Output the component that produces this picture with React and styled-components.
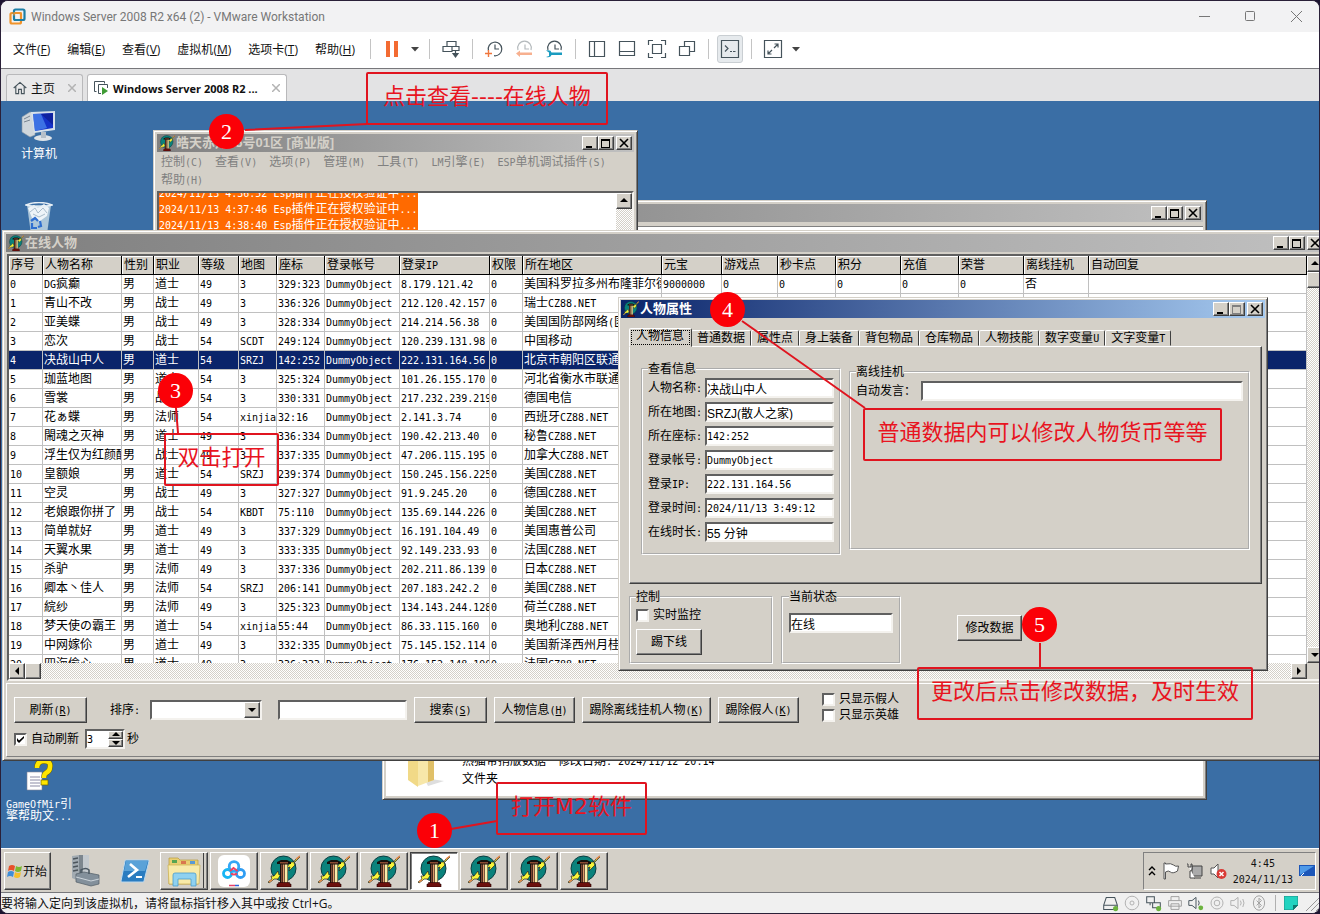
import { useState } from 'react';
import styled, { createGlobalStyle, css } from 'styled-components';

const GlobalStyle = createGlobalStyle`
  * {
    box-sizing: border-box;
  }
  body {
    margin: 0;
    background: #1c1430;
  }
  button, input, select {
    font: inherit;
    color: inherit;
    margin: 0;
    padding: 0;
  }
  button {
    background: none;
    border: 0;
    white-space: nowrap;
  }
`;

const modernFont = `'Open Sans', 'Noto Sans CJK SC', sans-serif`;
const classicFont = `'Liberation Sans', 'Noto Sans CJK SC', sans-serif`;

const raised = css`
  border: 1px solid;
  border-color: #d4d0c8 #404040 #404040 #d4d0c8;
  box-shadow: inset 1px 1px #fff, inset -1px -1px #808080;
`;

const raisedButton = css`
  border: 1px solid;
  border-color: #fff #404040 #404040 #fff;
  box-shadow: inset -1px -1px #808080;
  background: #d4d0c8;
`;

const sunken = css`
  border: 2px solid;
  border-color: #606060 #f4f2ee #f4f2ee #606060;
`;

const dither = css`
  background: repeating-conic-gradient(#fff 0 25%, #d4d0c8 0 50%) 0 0 / 2px 2px;
`;

/* ---------- host window ---------- */

const Host = styled.div`
  position: relative;
  display: flex;
  flex-direction: column;
  height: 100vh;
  min-height: 900px;
  border: 1px solid #2a2038;
  border-radius: 8px;
  overflow: hidden;
  background: #f0f0f0;
  font-family: ${modernFont};
  font-size: 12px;
  color: #111;
`;

const HostTitle = styled.header`
  display: flex;
  align-items: center;
  height: 31px;
  flex: none;
  padding-left: 8px;
  gap: 5px;
  background: #f2f2f3;
  color: #777;
`;

const HostName = styled.span`
  flex: 1;
  font-family: Roboto, sans-serif;
  font-size: 12px;
`;

const HostControl = styled.button`
  display: flex;
  align-items: center;
  justify-content: center;
  width: 46px;
  height: 30px;
`;

const HostControls = styled.div`
  display: flex;
`;

const MenuBar = styled.nav`
  display: flex;
  align-items: center;
  height: 37px;
  flex: none;
  padding: 0 0 2px 12px;
  background: #fff;
  border-bottom: 1px solid #77777b;
`;

const MenuList = styled.div`
  display: flex;
  gap: 17px;
  width: 351px;
`;

const Separator = styled.span`
  width: 1px;
  height: 20px;
  margin: 0 6px;
  background: #c4c4c4;
`;

const ToolButton = styled.button`
  display: flex;
  align-items: center;
  justify-content: center;
  width: ${props => (props.$narrow ? '16px' : '30px')};
  height: 28px;
`;

const ToolPressed = styled.span`
  display: flex;
  align-items: center;
  justify-content: center;
  width: 26px;
  height: 28px;
  border: 1px solid #c9ced2;
  border-radius: 3px;
  background: #e6eaed;
`;

const TabBar = styled.div`
  display: flex;
  align-items: flex-end;
  height: 32px;
  flex: none;
  padding-left: 5px;
  gap: 4px;
  background: #e3e3e4;
`;

const HostTab = styled.div`
  display: flex;
  align-items: center;
  height: 27px;
  width: ${props => props.$width};
  padding: 0 6px;
  gap: 4px;
  border: 1px solid #b9b9bb;
  border-bottom: 0;
  border-radius: 3px 3px 0 0;
  background: ${props => (props.$active ? '#fff' : '#e9e9ea')};
  font-weight: ${props => (props.$active ? 'bold' : 'normal')};
  font-size: ${props => (props.$active ? '11px' : '12px')};
`;

const TabName = styled.button`
  flex: 1;
  text-align: left;
`;

const StatusBar = styled.footer`
  display: flex;
  align-items: center;
  height: 21px;
  flex: none;
  border-top: 1px solid #77777b;
  background: #f0f0f0;
`;

const StatusText = styled.span`
  flex: 1;
`;

const StatusIcons = styled.div`
  display: flex;
  align-items: center;
  gap: 5px;
`;

const StatusDivider = styled.span`
  width: 1px;
  height: 16px;
  margin: 0 3px;
  background: #b0b0b0;
`;

/* ---------- guest desktop ---------- */

const Desktop = styled.main`
  position: relative;
  flex: 1;
  overflow: hidden;
  background: #3a6ea5;
  font-family: ${classicFont};
  font-size: 12px;
  line-height: 14px;
  color: #000;
`;

const Shortcut = styled.button`
  position: absolute;
  left: ${props => props.$x}px;
  top: ${props => props.$y}px;
  display: flex;
  flex-direction: column;
  align-items: center;
  gap: 6px;
  width: 76px;
  color: #fff;
  line-height: 12px;
  white-space: pre-line;
`;

const ShortcutLabel = styled.span`
  text-align: left;
`;

const Ascii = styled.span`
  font-family: 'DejaVu Sans Mono', monospace;
  font-size: 10px;
  line-height: 1;
`;

const Window = styled.section`
  position: absolute;
  left: ${props => props.$x}px;
  top: ${props => props.$y}px;
  width: ${props => props.$w};
  height: ${props => props.$h}px;
  right: ${props => props.$right || 'auto'};
  display: flex;
  flex-direction: column;
  padding: ${props => props.$frame || 3}px;
  background: #d4d0c8;
  ${raised}
`;

const Caption = styled.div`
  display: flex;
  align-items: center;
  height: 18px;
  flex: none;
  padding: 0 2px;
  gap: 1px;
  color: ${props => (props.$active ? '#fff' : '#d4d0c8')};
  font-size: 13px;
  font-weight: bold;
  background: ${props => (props.$active
    ? 'linear-gradient(90deg, #0a246a, #a6caf0)'
    : 'linear-gradient(90deg, #808080, #c0c0c0)')};
`;

const CaptionText = styled.span`
  flex: 1;
  white-space: pre;
`;

const CaptionButtons = styled.div`
  display: flex;

  button:last-child {
    margin-left: 2px;
  }
`;

const CaptionButton = styled.button`
  display: flex;
  align-items: center;
  justify-content: center;
  width: 16px;
  height: 14px;
  ${raisedButton}
`;

const WindowMenu = styled.nav`
  display: flex;
  flex-wrap: wrap;
  padding: 1px 0 2px;
  color: #808080;
`;

const WindowMenuItem = styled.button`
  height: 18px;
  margin-right: 6px;
  padding: 0 2px 0 4px;
`;

const LogBox = styled.div`
  display: flex;
  height: 60px;
  overflow: hidden;
  background: #fff;
  ${sunken}
`;

const LogLines = styled.div`
  flex: 1;
  margin-top: -8px;
`;

const LogLine = styled.div`
  width: 259px;
  height: 16px;
  line-height: 16px;
  background: #ff6a00;
  color: #fff;
  white-space: pre;
`;

const FolderBody = styled.div`
  display: flex;
  flex: 1;
  align-items: flex-end;
  gap: 16px;
  margin-top: 4px;
  padding: 0 0 8px 20px;
  background: #fff;
  border-top: 1px solid #808080;
`;

const FolderLines = styled.div`
  line-height: 18px;
  white-space: pre;
`;

/* ---------- online list ---------- */

const GridFrame = styled.div`
  margin: 2px 0 0 1px;
  ${sunken}
`;

const GridRow = styled.div`
  display: flex;
`;

const GridView = styled.div`
  flex: 1;
  min-width: 0;
  height: 407px;
  overflow: hidden;
  background: #fff;
`;

const Table = styled.table`
  width: 100%;
  table-layout: fixed;
  border-collapse: separate;
  border-spacing: 0;
`;

const Th = styled.th`
  width: ${props => props.$w};
  height: 19px;
  padding: 0 0 0 2px;
  overflow: hidden;
  text-align: left;
  font-weight: normal;
  white-space: nowrap;
  background: #d4d0c8;
  border-right: 1px solid #000;
  border-bottom: 1px solid #000;
  box-shadow: inset 1px 1px #fff;
`;

const Td = styled.td`
  height: 19px;
  padding: 0 0 0 1px;
  overflow: hidden;
  white-space: nowrap;
  border-right: 1px solid #c0c0c0;
  border-bottom: 1px solid #c0c0c0;
`;

const Tr = styled.tr`
  background: ${props => (props.$selected ? '#0a246a' : '#fff')};
  color: ${props => (props.$selected ? '#fff' : '#000')};
`;

const ScrollTrack = styled.div`
  display: flex;
  flex-direction: ${props => (props.$vertical ? 'column' : 'row')};
  flex: ${props => (props.$vertical ? 'none' : '1')};
  width: ${props => (props.$vertical ? '16px' : 'auto')};
  ${dither}

  button:last-child:not(:only-child) {
    margin: ${props => (props.$vertical ? 'auto 0 0' : '0 0 0 auto')};
  }
`;

const ScrollButton = styled.button`
  display: flex;
  align-items: center;
  justify-content: center;
  flex: none;
  width: 16px;
  height: 16px;
  ${raisedButton}
`;

const Corner = styled.span`
  width: 16px;
`;

const ActionPanel = styled.div`
  flex: 1;
  margin: 2px 0 0;
  padding: 13px 7px 0;
  border: 1px solid;
  border-color: #fff #808080 #808080 #fff;
`;

const ActionRow = styled.div`
  display: flex;
  align-items: center;
  gap: 7px;
  height: 26px;
`;

const AutoRow = styled.div`
  display: flex;
  align-items: center;
  gap: 2px;
  height: 20px;
  margin-top: 6px;

  label {
    margin-right: 4px;
  }
`;

const Button = styled.button`
  width: ${props => props.$w}px;
  height: 26px;
  ${raisedButton}
`;

const SortLabel = styled.label`
  margin: 0 3px 0 16px;
`;

const Combo = styled.div`
  position: relative;
  width: 112px;
  height: 20px;
  margin-right: 9px;
`;

const Select = styled.select`
  appearance: none;
  width: 100%;
  height: 100%;
  border-radius: 0;
  background: #fff;
  ${sunken}
`;

const ComboArrow = styled.span`
  position: absolute;
  top: 2px;
  right: 2px;
  display: flex;
  align-items: center;
  justify-content: center;
  width: 16px;
  height: 16px;
  pointer-events: none;
  ${raisedButton}
`;

const TextBox = styled.input`
  width: ${props => props.$w || '100%'};
  height: 20px;
  flex: ${props => (props.$grow ? '1' : 'none')};
  min-width: 0;
  background: #fff;
  ${sunken}
  ${props => props.$ascii && css`
    font-family: 'DejaVu Sans Mono', monospace;
    font-size: 10px;
  `}
`;

const CheckGroup = styled.div`
  display: flex;
  flex-direction: column;
  margin: 0 0 6px 16px;
`;

const CheckLabel = styled.label`
  display: flex;
  align-items: center;
  gap: 4px;
  height: 16px;
`;

const CheckBox = styled.input`
  appearance: none;
  width: 13px;
  height: 13px;
  background: #fff;
  ${sunken}

  &:checked {
    background: #fff url("data:image/svg+xml,%3Csvg xmlns='http://www.w3.org/2000/svg' viewBox='0 0 9 9'%3E%3Cpath d='M1 3v3l2 2 5-5V1L3 5.500z'/%3E%3C/svg%3E") center / 9px 9px no-repeat;
  }
`;

const Spinner = styled.div`
  display: flex;
  width: 40px;
  height: 20px;
  background: #fff;
  ${sunken}
`;

const SpinInput = styled.input`
  width: 20px;
  height: 16px;
  border: 0;
  background: none;
  font-family: 'DejaVu Sans Mono', monospace;
  font-size: 10px;
`;

const SpinButtons = styled.div`
  display: flex;
  flex-direction: column;
  margin-left: auto;
`;

const SpinButton = styled.button`
  display: flex;
  align-items: center;
  justify-content: center;
  width: 15px;
  height: 8px;
  ${raisedButton}
`;

/* ---------- player properties ---------- */

const TabStrip = styled.div`
  display: flex;
  align-items: flex-end;
  height: 28px;
  flex: none;
  padding-left: 10px;
`;

const Tab = styled.button`
  height: ${props => (props.$active ? '19px' : '16px')};
  margin: ${props => (props.$active ? '0 -1px -1px -2px' : '0')};
  padding: ${props => (props.$active ? '0 7px 2px 6px' : '0 5px')};
  z-index: ${props => (props.$active ? 1 : 0)};
  line-height: 13px;
  background: #d4d0c8;
  border: 1px solid;
  border-color: #fff #404040 transparent #fff;
  border-radius: 2px 2px 0 0;
  outline: ${props => (props.$active ? '1px dotted #000' : 'none')};
  outline-offset: -3px;
`;

const Pane = styled.div`
  display: flex;
  align-items: flex-start;
  gap: 8px;
  height: 238px;
  margin: 0 3px 0 8px;
  padding: 16px 11px 0;
  ${raisedButton}
`;

const Group = styled.fieldset`
  width: ${props => props.$w};
  flex: ${props => (props.$grow ? '1' : 'none')};
  height: ${props => props.$h}px;
  min-width: 0;
  margin: ${props => props.$offset || '0'};
  padding: ${props => props.$pad || '1px 5px 0'};
  border: 2px groove #fff;
`;

const Legend = styled.legend`
  padding: 0;
  line-height: 12px;
`;

const Field = styled.div`
  display: flex;
  align-items: center;
  height: 24px;
`;

const FieldLabel = styled.label`
  width: ${props => props.$w || '57px'};
  white-space: nowrap;
`;

const KickRow = styled.div`
  padding-top: 2px;
`;

const PropsFooter = styled.div`
  display: flex;
  align-items: flex-start;
  gap: 8px;
  padding: 7px 8px 0;
`;

const SaveCell = styled.div`
  padding: 24px 0 0 48px;
`;

/* ---------- taskbar ---------- */

const Taskbar = styled.div`
  display: flex;
  align-items: center;
  height: 44px;
  flex: none;
  padding: 0 3px;
  background: #d4d0c8;
  border-top: 1px solid #fff;
  font-family: ${classicFont};
`;

const StartButton = styled.button`
  display: flex;
  align-items: center;
  width: 47px;
  height: 38px;
  padding-left: 2px;
  ${raisedButton}
`;

const Launchers = styled.div`
  display: flex;
  margin: 0 7px 0 9px;
`;

const Launcher = styled.button`
  display: flex;
  align-items: center;
  justify-content: center;
  width: 50px;
  height: 38px;
`;

const Tasks = styled.div`
  display: flex;
  flex: 1;
  gap: 2px;
  margin-left: -7px;
`;

const Task = styled.button`
  display: flex;
  align-items: center;
  justify-content: center;
  width: 48px;
  height: 38px;
  ${raisedButton}
  ${props => props.$stacked && css`
    box-shadow: inset -1px -1px #808080, inset -3px 0 #d4d0c8, inset -4px 0 #404040;
  `}
  ${props => props.$active && css`
    background: #fff;
    border-color: #404040 #fff #fff #404040;
    box-shadow: inset 1px 1px #808080;
  `}
`;

const Tray = styled.div`
  display: flex;
  align-items: center;
  gap: 6px;
  height: 38px;
  padding: 0 0 0 4px;
  border: 1px solid;
  border-color: #808080 #fff #fff #808080;
`;

const Clock = styled.div`
  text-align: center;
  line-height: 16px;
`;

/* ---------- tutorial notes ---------- */

const Notes = styled.div`
  position: absolute;
  inset: 0;
  pointer-events: none;
  font-family: 'DejaVu Sans', 'Noto Sans CJK SC', sans-serif;
`;

const NoteLines = styled.svg`
  position: absolute;
  inset: 0;
  width: 100%;
  height: 100%;
`;

const NoteBox = styled.div`
  position: absolute;
  left: ${props => props.$x}px;
  top: ${props => props.$y}px;
  width: ${props => props.$w}px;
  height: 53px;
  border: 2px solid #e0141f;
  border-radius: 2px;
  color: #e8141f;
  font-size: 22px;
  line-height: 46px;
  text-align: center;
  white-space: nowrap;
`;

const NoteDot = styled.div`
  position: absolute;
  left: ${props => props.$x}px;
  top: ${props => props.$y}px;
  width: 35px;
  height: 35px;
  border-radius: 50%;
  background: #fb0007;
  color: #fff;
  font-family: 'Liberation Serif', serif;
  font-size: 22px;
  line-height: 35px;
  text-align: center;
`;

/* ---------- icons ---------- */

const Line = ({ size = 20, color = '#45535b', width = 1.2, children }) => (
  <svg width={size} height={size} viewBox="0 0 20 20" fill="none" stroke={color} strokeWidth={width}>
    {children}
  </svg>
);

const VmwareIcon = () => (
  <svg width="17" height="17" viewBox="0 0 17 17" fill="none" strokeWidth="2.200">
    <rect x="1.500" y="5" width="10.500" height="10.500" rx="1.500" stroke="#f0932b" />
    <rect x="5" y="1.500" width="10.500" height="10.500" rx="1.500" stroke="#1d7fa6" />
    <path d="M5 7.500V5h7v4" stroke="#f0932b" strokeWidth="1.400" />
  </svg>
);

const Caret = () => (
  <svg width="8" height="5" viewBox="0 0 8 5"><path d="M0 0h8L4 4.500z" fill="#444" /></svg>
);

const SmallX = () => (
  <svg width="8" height="8" viewBox="0 0 8 8" stroke="#b3b3b3" strokeWidth="1.500"><path d="M0 0l8 8M8 0L0 8" /></svg>
);

// the column and lightning logo of the game engine
const EngineIcon = ({ size = 32 }) => (
  <svg width={size} height={size} viewBox="0 0 32 32">
    <circle cx="15.500" cy="13.500" r="12.500" fill="#0a827c" stroke="#0a3d40" />
    <path d="M0 27l4-3-1-3h3l4-5 1 4 2-1-3 5-4 0-1 1-4 3z" fill="#f7f53a" stroke="#222" strokeWidth=".7" />
    <path d="M32 1l-5 4-1 2-3 0-5 6 4-1-1 4 6-6-1-2 2-2 4-4z" fill="#f7f53a" stroke="#222" strokeWidth=".7" />
    <path d="M28 4l4-3M1 27l3-2" stroke="#e9864a" strokeWidth="1.300" />
    <path d="M9 7l4-2h6l4 2v2h-3v19h-8V9H9z" fill="#15100e" />
    <path d="M12 7h8v1.500h-8z" fill="#8a4a32" />
    <path d="M13 9.500h1.500V28H13z" fill="#7e4630" />
    <path d="M15 9.500h1.500V28H15z" fill="#dc9a6b" />
    <path d="M17 9.500h2.500V28H17z" fill="#f8eda8" />
    <path d="M10.500 27.500h11V29H23v3H9v-3h1.500z" fill="#6d0f0c" stroke="#200" strokeWidth=".6" />
  </svg>
);

const Arrow = ({ dir }) => {
  const paths = {
    up: 'M0 5h8L4 1z',
    down: 'M0 2h8L4 6z',
    left: 'M6 0v8L2 4z',
    right: 'M2 0v8l4-4z',
  };
  return <svg width="8" height="8" viewBox="0 0 8 8"><path d={paths[dir]} fill="#000" /></svg>;
};

const ComputerIcon = () => (
  <svg width="36" height="32" viewBox="0 0 36 32">
    <path d="M1 7l8-5 5 1v22l-5 2-8-5z" fill="#cfd6dc" stroke="#8b98a5" strokeWidth=".6" />
    <path d="M3 9l6-3M3 12l6-2" stroke="#798591" />
    <ellipse cx="22" cy="28" rx="9" ry="3" fill="#dfe4e8" />
    <path d="M20 22h5v6h-5z" fill="#b6c0c9" />
    <path d="M10 2l24-1v19l-21 3z" fill="#d5e0ea" />
    <path d="M12 4l20-1v15l-18 3z" fill="#1432c8" />
    <path d="M12 4l8 0 6 14-12 3z" fill="#4d8cf0" opacity=".7" />
    <path d="M20 4l12-1v12z" fill="#0b1b8f" opacity=".7" />
  </svg>
);

const BinIcon = () => (
  <svg width="28" height="34" viewBox="0 0 28 34">
    <path d="M2 3h24l-4 29H6z" fill="#b9cfdf" opacity=".9" />
    <path d="M3 6l6-3 4 3 6-4 5 4-2 8-7 5-8-3z" fill="#eef4f8" />
    <path d="M5 10l5-4 3 5 5-5 4 5M8 12l6 3 6-3" fill="none" stroke="#a9bccb" />
    <path d="M1 3q13-5 26 0-13 4-26 0z" fill="none" stroke="#e7eff5" strokeWidth="1.500" />
    <path d="M6 19l4-3 3 3M7 21l0 5 5 0M13 25l3-1-1-5" fill="none" stroke="#2f6fd0" strokeWidth="2.200" />
  </svg>
);

const HelpFileIcon = () => (
  <svg width="28" height="34" viewBox="0 0 28 34">
    <path d="M2 14h15v18H2z" fill="#fff" stroke="#889" strokeWidth=".6" />
    <path d="M5 19h10M5 22h10M5 25h10M5 28h10" stroke="#8b8ba5" />
    <path d="M12 10q0-7 7-7t6 6q0 4-4 6-2 1-2 5" fill="none" stroke="#6f6400" strokeWidth="5.500" />
    <path d="M12 10q0-7 7-7t6 6q0 4-4 6-2 1-2 5" fill="none" stroke="#ffe600" strokeWidth="4.500" />
    <rect x="16" y="22" width="7" height="5" fill="#ffe600" stroke="#6f6400" strokeWidth=".7" />
  </svg>
);

const FolderIcon = () => (
  <svg width="40" height="44" viewBox="0 0 40 44">
    <path d="M18 34l20 3-16 5z" fill="#c8c8c8" opacity=".6" />
    <path d="M2 0h10v43L2 36z" fill="#f1d987" />
    <path d="M12 0h16v36l-16 6z" fill="#f7e7a9" />
    <path d="M22 0h6v36l-6 2z" fill="#e0c068" />
  </svg>
);

const StartIcon = () => (
  <svg width="16" height="16" viewBox="0 0 16 16">
    <path d="M2 3q3-2 6 0L7 8Q4 6 1 8z" fill="#e8502a" />
    <path d="M9 3q3 2 6 0l-1 5q-3 2-6 0z" fill="#7cb82f" />
    <path d="M1 9q3-2 6 0l-1 5q-3-2-6 0z" fill="#3f8ed8" />
    <path d="M8 9q3 2 6 0l-1 5q-3 2-6 0z" fill="#f5bf2a" />
  </svg>
);

const ServerIcon = () => (
  <svg width="30" height="32" viewBox="0 0 30 32">
    <path d="M2 1l7-1v26l-7-3z" fill="#a2abb2" />
    <path d="M9 0h10v22H9z" fill="#7c868e" />
    <path d="M13 0h6v22h-6z" fill="#c3c9ce" />
    <path d="M3 4l5-1M3 8l5-1M3 12l5-1M3 16l5-1" stroke="#4c555c" strokeWidth="1.400" />
    <path d="M6 19l8-2 15 3v9l-8 2-15-4z" fill="#83909b" stroke="#505c66" strokeWidth=".7" />
    <path d="M11 18v-3q5-3 8 0v4" fill="none" stroke="#4c5963" strokeWidth="1.600" />
    <path d="M6 22l15 4 8-2" fill="none" stroke="#cdd5db" />
  </svg>
);

const PowerShellIcon = () => (
  <svg width="30" height="26" viewBox="0 0 30 26">
    <path d="M6 2h22q1 0 1 1l-5 20q0 1-1 1H2q-1 0-1-1L5 3q0-1 1-1z" fill="#2a7cc0" stroke="#bcd9ee" />
    <path d="M6 3h22l-3 10H4z" fill="#6fb2e2" opacity=".7" />
    <path d="M10 6l7 6-9 7" fill="none" stroke="#fff" strokeWidth="2.600" />
    <path d="M16 19h6" stroke="#fff" strokeWidth="2.200" />
  </svg>
);

const ExplorerIcon = () => (
  <svg width="34" height="32" viewBox="0 0 34 32">
    <path d="M2 3h9l2 2h18v24H2z" fill="#e9cf74" stroke="#b99b3c" strokeWidth=".7" />
    <path d="M5 5h5v3H5z" fill="#57a552" /><path d="M14 6h5v3h-5z" fill="#d9774e" /><path d="M23 6h5v3h-5z" fill="#5a9ad5" />
    <path d="M1 10h32l-1 19H2z" fill="#f8eaa8" stroke="#cbb050" strokeWidth=".7" />
    <path d="M6 31V20q0-2 2-2h19q2 0 2 2v11h-5v-7H11v7z" fill="#8fd1f0" stroke="#4a9dcb" strokeWidth=".8" />
  </svg>
);

const BaiduIcon = () => (
  <svg width="32" height="32" viewBox="0 0 32 32" fill="none" strokeWidth="2.800">
    <rect width="32" height="32" rx="6" fill="#fff" />
    <circle cx="16" cy="11.500" r="4.800" stroke="#35a7f5" />
    <circle cx="9.500" cy="18.500" r="4" stroke="#18b6f4" />
    <circle cx="22.500" cy="18.500" r="4" stroke="#2f9df3" />
    <path d="M12 16l3.500-3 4 3M13 18.500q3 2 6 0" stroke="#ee4262" strokeWidth="2" />
    <path d="M11 30.500h6" stroke="#e8406a" strokeWidth="1.500" /><path d="M17 30.500h4" stroke="#2d62d8" strokeWidth="1.500" />
  </svg>
);

const Dot = () => <circle cx="16" cy="16" r="3" fill="#6cb33f" stroke="none" />;

/* ---------- data ---------- */

const columns = [
  ['序号', 34], ['人物名称', 79], ['性别', 32], ['职业', 45], ['等级', 40], ['地图', 38],
  ['座标', 48], ['登录帐号', 75], ['登录IP', 90], ['权限', 33], ['所在地区', 139], ['元宝', 60],
  ['游戏点', 56], ['秒卡点', 58], ['积分', 65], ['充值', 58], ['荣誉', 65], ['离线挂机', 65],
  ['自动回复', null],
];

const players = [
  ['DG疯癫', '道士', 49, '3', '329:323', '8.179.121.42', '美国科罗拉多州布隆菲尔德'],
  ['青山不改', '战士', 49, '3', '336:326', '212.120.42.157', '瑞士CZ88.NET'],
  ['亚美蝶', '战士', 49, '3', '328:334', '214.214.56.38', '美国国防部网络(匿名)'],
  ['恋次', '战士', 54, 'SCDT', '249:124', '120.239.131.98', '中国移动'],
  ['决战山中人', '道士', 54, 'SRZJ', '142:252', '222.131.164.56', '北京市朝阳区联通'],
  ['珈蓝地图', '道士', 54, '3', '325:324', '101.26.155.170', '河北省衡水市联通'],
  ['雪裳', '战士', 54, '3', '330:331', '217.232.239.219', '德国电信'],
  ['花ぁ蝶', '法师', 54, 'xinjia', '32:16', '2.141.3.74', '西班牙CZ88.NET'],
  ['閙魂之灭神', '道士', 49, '3', '336:334', '190.42.213.40', '秘鲁CZ88.NET'],
  ['浮生仅为红颜醉', '战士', 49, '3', '337:335', '47.206.115.195', '加拿大CZ88.NET'],
  ['皇额娘', '道士', 54, 'SRZJ', '239:374', '150.245.156.225', '美国CZ88.NET'],
  ['空灵', '战士', 49, '3', '327:327', '91.9.245.20', '德国CZ88.NET'],
  ['老娘跟你拼了', '战士', 54, 'KBDT', '75:110', '135.69.144.226', '美国CZ88.NET'],
  ['简单就好', '道士', 49, '3', '337:329', '16.191.104.49', '美国惠普公司'],
  ['天翼水果', '道士', 49, '3', '333:335', '92.149.233.93', '法国CZ88.NET'],
  ['杀驴', '法师', 49, '3', '337:336', '202.211.86.139', '日本CZ88.NET'],
  ['卿本丶佳人', '法师', 54, 'SRZJ', '206:141', '207.183.242.2', '美国CZ88.NET'],
  ['綄纱', '法师', 49, '3', '325:323', '134.143.244.128', '荷兰CZ88.NET'],
  ['梦天使の霸王', '道士', 54, 'xinjia', '55:44', '86.33.115.160', '奥地利CZ88.NET'],
  ['中网嫁伱', '道士', 49, '3', '332:335', '75.145.152.114', '美国新泽西州月桂'],
  ['四海偷心', '道士', 49, '3', '336:333', '176.152.148.190', '法国CZ88.NET'],
];

const info = [
  ['人物名称:', '决战山中人'],
  ['所在地图:', 'SRZJ(散人之家)'],
  ['所在座标:', '142:252'],
  ['登录帐号:', 'DummyObject'],
  ['登录IP:', '222.131.164.56'],
  ['登录时间:', '2024/11/13 3:49:12'],
  ['在线时长:', '55 分钟'],
];

const propTabs = ['人物信息', '普通数据', '属性点', '身上装备', '背包物品', '仓库物品', '人物技能', '数字变量U', '文字变量T'];

const isAscii = text => /^[\x20-\x7e]*$/.test(text);

// latin runs take half the width of a CJK character
const Txt = ({ children }) => String(children).split(/([\x20-\x7e]+)/).filter(Boolean).map((part, i) => (
  isAscii(part) ? <Ascii key={i}>{part}</Ascii> : part
));

const Hot = ({ text, letter }) => (
  <>{text}<Ascii>(<u>{letter}</u>)</Ascii></>
);

function WindowButtons({ maxDisabled }) {
  const c = maxDisabled ? '#808080' : '#000';
  return (
    <CaptionButtons>
      <CaptionButton aria-label="最小化">
        <svg width="10" height="10" viewBox="0 0 10 10"><path d="M1 8h6v2H1z" /></svg>
      </CaptionButton>
      <CaptionButton aria-label="最大化" disabled={maxDisabled}>
        <svg width="10" height="10" viewBox="0 0 10 10"><path d="M0 1h9v9H0zM1 3v6h7V3z" fill={c} fillRule="evenodd" /></svg>
      </CaptionButton>
      <CaptionButton aria-label="关闭">
        <svg width="10" height="10" viewBox="0 0 10 10" stroke="#000" strokeWidth="1.600"><path d="M1 1l8 8M9 1L1 9" /></svg>
      </CaptionButton>
    </CaptionButtons>
  );
}

function HostToolbar() {
  return (
    <>
      <Separator />
      <ToolButton aria-label="暂停">
        <svg width="12" height="16" viewBox="0 0 12 16"><path d="M0 0h4v16H0zM8 0h4v16H8z" fill="#f36b32" /></svg>
      </ToolButton>
      <ToolButton $narrow aria-label="电源选项"><Caret /></ToolButton>
      <Separator />
      <ToolButton aria-label="发送">
        <Line><path d="M6 2.500h9v5H6zM2 7.500h9v5H2zM11 7.500h7v4h-7M14.500 11v6" /><path d="M12 14.500h5L14.500 18z" fill="#45535b" /></Line>
      </ToolButton>
      <Separator />
      <ToolButton aria-label="拍摄快照">
        <Line><path d="M4.500 12A6.800 6.800 0 1 1 10 16.700M11 5.500V10h4" /><path d="M1 14.500h7M4.500 11v7" stroke="#f0763c" strokeWidth="1.400" /></Line>
      </ToolButton>
      <ToolButton aria-label="恢复快照" disabled>
        <Line color="#b5babd"><path d="M4 11a6.800 6.800 0 1 1 13 0M11 5.500V10h4" /><path d="M2 14.500l4-3v2h12v2.500H6v2z" fill="#f7b08f" stroke="none" /></Line>
      </ToolButton>
      <ToolButton aria-label="管理快照">
        <Line><path d="M4 11a6.800 6.800 0 1 1 13 0M11 5.500V10h4" /><path d="M2 11.500q5-1 5.500 2H18V16H7.500q-1 3-5.500 2l3-1v-3.500z" fill="#1b9cc0" stroke="none" /></Line>
      </ToolButton>
      <Separator />
      <ToolButton aria-label="显示库"><Line><path d="M2.500 2.500h15v15h-15zM7.500 2.500v15" /></Line></ToolButton>
      <ToolButton aria-label="缩略图栏"><Line><path d="M2.500 2.500h15v14h-15zM2.500 12.500h15" /></Line></ToolButton>
      <ToolButton aria-label="全屏"><Line><path d="M1.500 6V1.500H6M14 1.500h4.500V6M18.500 14v4.500H14M6 18.500H1.500V14M5.500 5.500h9v9h-9z" /></Line></ToolButton>
      <ToolButton aria-label="Unity"><Line><path d="M7.500 7V2.500h10v10H13M2.500 7.500h10v9h-10z" /></Line></ToolButton>
      <Separator />
      <ToolButton aria-label="控制台">
        <ToolPressed><Line><path d="M1.500 1.500h17v17h-17zM5 6.500l3 3-3 3M10 12.500h2M13 12.500h2.500" /></Line></ToolPressed>
      </ToolButton>
      <Separator />
      <ToolButton aria-label="拉伸">
        <Line><path d="M1.500 1.500h17v17h-17zM11.500 5H15v3.500M15 5l-4 4M8.500 15H5v-3.500M5 15l4-4" /></Line>
      </ToolButton>
      <ToolButton $narrow aria-label="拉伸选项"><Caret /></ToolButton>
    </>
  );
}

function OnlineWindow() {
  const [selected, setSelected] = useState(4);

  return (
    <Window $x={1} $y={129} $w="auto" $right="-10px" $h={531}>
      <Caption>
        <EngineIcon size={16} />
        <CaptionText>在线人物</CaptionText>
        <WindowButtons />
      </Caption>
      <GridFrame>
        <GridRow>
          <GridView>
            <Table>
              <thead>
                <tr>
                  {columns.map(([name, w]) => (
                    <Th key={name} $w={w ? `${w}px` : 'auto'}><Txt>{name}</Txt></Th>
                  ))}
                </tr>
              </thead>
              <tbody>
                {players.map(([name, job, level, map, pos, ip, area], i) => {
                  const cells = [i, name, '男', job, level, map, pos, 'DummyObject', ip, 0, area, 9000000, 0, 0, 0, 0, 0, '否', ''];
                  return (
                    <Tr key={name} $selected={i === selected} onClick={() => setSelected(i)}>
                      {cells.map((cell, c) => <Td key={c}><Txt>{cell}</Txt></Td>)}
                    </Tr>
                  );
                })}
              </tbody>
            </Table>
          </GridView>
          <ScrollTrack $vertical>
            <ScrollButton aria-label="向上"><Arrow dir="up" /></ScrollButton>
            <ScrollButton aria-label="滑块" />
            <ScrollButton aria-label="向下"><Arrow dir="down" /></ScrollButton>
          </ScrollTrack>
        </GridRow>
        <GridRow>
          <ScrollTrack>
            <ScrollButton aria-label="向左"><Arrow dir="left" /></ScrollButton>
            <ScrollButton aria-label="滑块" />
            <ScrollButton aria-label="向右"><Arrow dir="right" /></ScrollButton>
          </ScrollTrack>
          <Corner />
        </GridRow>
      </GridFrame>
      <ActionPanel>
        <ActionRow>
          <Button $w={73}><Hot text="刷新" letter="R" /></Button>
          <SortLabel htmlFor="sort"><Txt>排序:</Txt></SortLabel>
          <Combo>
            <Select id="sort" />
            <ComboArrow><Arrow dir="down" /></ComboArrow>
          </Combo>
          <TextBox $w="129px" aria-label="搜索内容" />
          <Button $w={73}><Hot text="搜索" letter="S" /></Button>
          <Button $w={81}><Hot text="人物信息" letter="H" /></Button>
          <Button $w={129}><Hot text="踢除离线挂机人物" letter="K" /></Button>
          <Button $w={81}><Hot text="踢除假人" letter="K" /></Button>
          <CheckGroup>
            <CheckLabel><CheckBox type="checkbox" />只显示假人</CheckLabel>
            <CheckLabel><CheckBox type="checkbox" />只显示英雄</CheckLabel>
          </CheckGroup>
        </ActionRow>
        <AutoRow>
          <CheckLabel><CheckBox type="checkbox" defaultChecked />自动刷新</CheckLabel>
          <Spinner>
            <SpinInput aria-label="刷新间隔" defaultValue="3" />
            <SpinButtons>
              <SpinButton aria-label="增加"><Arrow dir="up" /></SpinButton>
              <SpinButton aria-label="减少"><Arrow dir="down" /></SpinButton>
            </SpinButtons>
          </Spinner>
          <span>秒</span>
        </AutoRow>
      </ActionPanel>
    </Window>
  );
}

function PropertiesWindow() {
  const [tab, setTab] = useState(0);

  return (
    <Window $x={617} $y={196} $w="650px" $h={374} $frame={2}>
      <Caption $active>
        <EngineIcon size={16} />
        <CaptionText>人物属性</CaptionText>
        <WindowButtons maxDisabled />
      </Caption>
      <TabStrip role="tablist">
        {propTabs.map((name, i) => (
          <Tab key={name} role="tab" $active={i === tab} aria-selected={i === tab} onClick={() => setTab(i)}>
            <Txt>{name}</Txt>
          </Tab>
        ))}
      </TabStrip>
      <Pane>
        <Group $w="200px" $h={192}>
          <Legend>查看信息</Legend>
          {info.map(([label, value], i) => (
            <Field key={label}>
              <FieldLabel htmlFor={`info${i}`}><Txt>{label}</Txt></FieldLabel>
              <TextBox id={`info${i}`} $grow $ascii={isAscii(value)} defaultValue={value} />
            </Field>
          ))}
        </Group>
        <Group $grow $h={184} $offset="3px 0 0">
          <Legend>离线挂机</Legend>
          <Field>
            <FieldLabel htmlFor="speak" $w="65px">自动发言：</FieldLabel>
            <TextBox id="speak" $grow />
          </Field>
        </Group>
      </Pane>
      <PropsFooter>
        <Group $w="144px" $h={73} $pad="0 5px">
          <Legend>控制</Legend>
          <Field><CheckLabel><CheckBox type="checkbox" />实时监控</CheckLabel></Field>
          <KickRow><Button $w={66}>踢下线</Button></KickRow>
        </Group>
        <Group $w="120px" $h={73} $pad="10px 6px 0">
          <Legend>当前状态</Legend>
          <TextBox aria-label="当前状态" defaultValue="在线" />
        </Group>
        <SaveCell><Button $w={65}>修改数据</Button></SaveCell>
      </PropsFooter>
    </Window>
  );
}

function GuestTaskbar() {
  return (
    <Taskbar>
      <StartButton><StartIcon />开始</StartButton>
      <Launchers>
        <Launcher aria-label="服务器管理器"><ServerIcon /></Launcher>
        <Launcher aria-label="PowerShell"><PowerShellIcon /></Launcher>
      </Launchers>
      <Tasks>
        <Task $stacked aria-label="资源管理器"><ExplorerIcon /></Task>
        <Task aria-label="网盘"><BaiduIcon /></Task>
        {[0, 1, 2, 3, 4, 5, 6].map(i => (
          <Task key={i} $active={i === 3} aria-label="引擎"><EngineIcon /></Task>
        ))}
      </Tasks>
      <Tray>
        <svg width="8" height="10" viewBox="0 0 8 10" fill="none" stroke="#000" strokeWidth="1.400"><path d="M1 4l3-3 3 3M1 9l3-3 3 3" /></svg>
        <svg width="18" height="18" viewBox="0 0 18 18" fill="#fff" stroke="#555"><path d="M2 1v16h1.500V10q3-2 5 0t7-1l1-5q-3 1-5-1t-8-1V1z" /></svg>
        <svg width="17" height="18" viewBox="0 0 17 18" fill="#aaa" stroke="#444"><path d="M6 4h10v10H6zM8 16h7" /><path d="M1 2h1v3h3V2h1v5q0 2-2 2v7h5" fill="#fff" /></svg>
        <svg width="18" height="18" viewBox="0 0 18 18"><path d="M2 6h3l4-4v14l-4-4H2z" fill="#fff" stroke="#555" /><circle cx="12.500" cy="12" r="5" fill="#d93a35" /><path d="M10.500 10l4 4m0-4l-4 4" stroke="#fff" strokeWidth="1.500" /></svg>
        <Clock><Ascii>4:45</Ascii><br /><Ascii>2024/11/13</Ascii></Clock>
        <svg width="16" height="14" viewBox="0 0 16 14"><path d="M0 1h16v11H0z" fill="#1c56b8" /><path d="M1 2h14L1 11z" fill="#4f9ae8" /><path d="M2 12l3-3" stroke="#fff" /></svg>
      </Tray>
    </Taskbar>
  );
}

function TutorialNotes() {
  return (
    <Notes>
      <NoteLines stroke="#e0141f" strokeWidth="2">
        <path d="M450 828L496 820M244 129L366 123M175 407L177 432M741 320L864 407M1039 642V668" />
      </NoteLines>
      <NoteBox $x={365} $y={71} $w={242}>点击查看----在线人物</NoteBox>
      <NoteBox $x={495} $y={781} $w={151}>打开M2软件</NoteBox>
      <NoteBox $x={163} $y={432} $w={115}>双击打开</NoteBox>
      <NoteBox $x={862} $y={407} $w={359}>普通数据内可以修改人物货币等等</NoteBox>
      <NoteBox $x={916} $y={666} $w={336}>更改后点击修改数据，及时生效</NoteBox>
      <NoteDot $x={416} $y={812}>1</NoteDot>
      <NoteDot $x={208} $y={113}>2</NoteDot>
      <NoteDot $x={157} $y={372}>3</NoteDot>
      <NoteDot $x={709} $y={291}>4</NoteDot>
      <NoteDot $x={1021} $y={606}>5</NoteDot>
    </Notes>
  );
}

export default function App() {
  const menus = [['文件', 'F'], ['编辑', 'E'], ['查看', 'V'], ['虚拟机', 'M'], ['选项卡', 'T'], ['帮助', 'H']];
  const engineMenus = ['控制(C)', '查看(V)', '选项(P)', '管理(M)', '工具(T)', 'LM引擎(E)', 'ESP单机调试插件(S)', '帮助(H)'];

  return (
    <Host>
      <GlobalStyle />
      <HostTitle>
        <VmwareIcon />
        <HostName>Windows Server 2008 R2 x64 (2) - VMware Workstation</HostName>
        <HostControls>
          <HostControl aria-label="最小化"><svg width="11" height="11" stroke="#777"><path d="M0 5.500h11" /></svg></HostControl>
          <HostControl aria-label="最大化"><svg width="11" height="11" stroke="#777" fill="none"><rect x=".5" y=".5" width="9" height="9" rx="1" /></svg></HostControl>
          <HostControl aria-label="关闭"><svg width="11" height="11" stroke="#777"><path d="M0 0l11 11M11 0L0 11" /></svg></HostControl>
        </HostControls>
      </HostTitle>
      <MenuBar>
        <MenuList>
          {menus.map(([text, key]) => <button key={text}>{text}(<u>{key}</u>)</button>)}
        </MenuList>
        <HostToolbar />
      </MenuBar>
      <TabBar>
        <HostTab $width="77px">
          <Line size={14} width={1.6}><path d="M1 10l9-8 9 8M4 8v10h4v-6h4v6h4V8" /></Line>
          <TabName>主页</TabName>
          <SmallX />
        </HostTab>
        <HostTab $active $width="200px">
          <svg width="15" height="14" viewBox="0 0 15 14" fill="none" stroke="#45535b"><path d="M2.500 10.500h-2v-10h10v2M7 12.500H4.500v-9h9V7" /><path d="M8 6l6 4-6 4z" fill="#3f9b35" stroke="none" /></svg>
          <TabName>Windows Server 2008 R2 ...</TabName>
          <SmallX />
        </HostTab>
      </TabBar>

      <Desktop>
        <Shortcut $x={0} $y={9}><ComputerIcon /><ShortcutLabel>计算机</ShortcutLabel></Shortcut>
        <Shortcut $x={0} $y={101}><BinIcon /><ShortcutLabel>回收站</ShortcutLabel></Shortcut>
        <Shortcut $x={0} $y={657}><HelpFileIcon /><ShortcutLabel><Ascii>GameOfMir</Ascii>引{'\n'}擎帮助文<Ascii>...</Ascii></ShortcutLabel></Shortcut>

        <Window $x={381} $y={99} $w="825px" $h={600}>
          <Caption><CaptionText /><WindowButtons /></Caption>
          <FolderBody>
            <FolderIcon />
            <FolderLines>
              <div><Txt>热猫带捎版数据  修改日期: 2024/11/12 20:14</Txt></div>
              <div>文件夹</div>
            </FolderLines>
          </FolderBody>
        </Window>

        <Window $x={152} $y={29} $w="485px" $h={130}>
          <Caption>
            <EngineIcon size={16} />
            <CaptionText>皓天赤月15号01区 [商业版]</CaptionText>
            <WindowButtons />
          </Caption>
          <WindowMenu>
            {engineMenus.map(name => <WindowMenuItem key={name}><Txt>{name}</Txt></WindowMenuItem>)}
          </WindowMenu>
          <LogBox>
            <LogLines>
              {['4:36:52', '4:37:46', '4:38:40'].map(time => (
                <LogLine key={time}><Txt>{`2024/11/13 ${time} Esp插件正在授权验证中...`}</Txt></LogLine>
              ))}
            </LogLines>
            <ScrollTrack $vertical>
              <ScrollButton aria-label="向上"><Arrow dir="up" /></ScrollButton>
            </ScrollTrack>
          </LogBox>
        </Window>

        <OnlineWindow />
        <PropertiesWindow />
      </Desktop>

      <GuestTaskbar />

      <StatusBar>
        <StatusText>要将输入定向到该虚拟机，请将鼠标指针移入其中或按 Ctrl+G。</StatusText>
        <StatusIcons>
          <Line size={17}><path d="M2 12l3-9h10l3 9v5H2zM2 12h16" /><Dot /></Line>
          <Line size={16} color="#b0b0b0"><circle cx="10" cy="10" r="8.500" /><circle cx="10" cy="10" r="2.500" /></Line>
          <Line size={17}><path d="M2 2h9v7H2zM6 9v3M9 9h9v6H9z" /><Dot /></Line>
          <Line size={16} color="#a0a0a0"><path d="M5 7V2h10v5M2 7h16v7H2zM5 11h10v7H5z" /></Line>
          <Line size={16}><path d="M1 7h4l5-4v14l-5-4H1zM13 7q2 3 0 6" /><Dot /></Line>
          <Line size={16} color="#b0b0b0"><circle cx="10" cy="10" r="7.500" /><circle cx="10" cy="10" r="3.500" /></Line>
          <Line size={16} color="#b0b0b0"><path d="M1 7h4l5-4v14l-5-4H1zM13 7q2 3 0 6M16 5q3 5 0 10" /></Line>
          <Line size={16} color="#a0a0a0"><ellipse cx="10" cy="10" rx="7" ry="9" /><path d="M7 7l6 6-3 3V4l3 3-6 6" /></Line>
          <StatusDivider />
          <svg width="14" height="14" viewBox="0 0 14 14"><path d="M0 0h14v9l-5 5H0z" fill="#22d3c0" stroke="#1d8f86" /><path d="M14 9H9v5z" fill="#0f776f" /></svg>
          <svg width="16" height="16" viewBox="0 0 16 16" stroke="#999"><path d="M3 16L16 3M8 16l8-8M13 16l3-3" /></svg>
        </StatusIcons>
      </StatusBar>

      <TutorialNotes />
    </Host>
  );
}
